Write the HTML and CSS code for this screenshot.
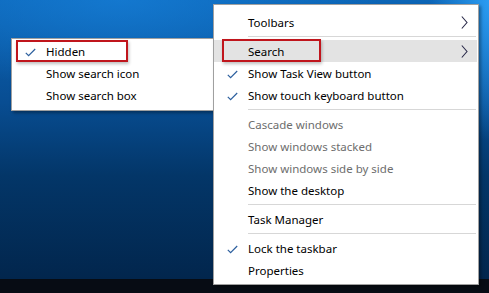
FILE: index.html
```html
<!DOCTYPE html>
<html>
  <head>
    <meta charset="utf-8">
    <title>Taskbar menu</title>
    <link rel="stylesheet" href="styles.css">
  </head>
  <body>
    <div class="desktop">

      <!-- search submenu -->
      <div class="menu submenu">
        <div class="item checked">
          <svg class="check" width="11" height="9" viewBox="0 0 11 9"><polyline points="0.8,4.8 3.6,7.6 10.2,1" /></svg>
          Hidden
        </div>
        <div class="item">Show search icon</div>
        <div class="item">Show search box</div>
      </div>

      <!-- taskbar context menu -->
      <div class="menu mainmenu">
        <div class="item">
          Toolbars
          <svg class="arrow" width="7" height="13" viewBox="0 0 7 13"><polyline points="0.8,0.5 6,6.5 0.8,12.5" /></svg>
        </div>
        <div class="sep"></div>
        <div class="item active">
          Search
          <svg class="arrow" width="7" height="13" viewBox="0 0 7 13"><polyline points="0.8,0.5 6,6.5 0.8,12.5" /></svg>
        </div>
        <div class="item checked">
          <svg class="check" width="11" height="9" viewBox="0 0 11 9"><polyline points="0.8,4.8 3.6,7.6 10.2,1" /></svg>
          Show Task View button
        </div>
        <div class="item checked">
          <svg class="check" width="11" height="9" viewBox="0 0 11 9"><polyline points="0.8,4.8 3.6,7.6 10.2,1" /></svg>
          Show touch keyboard button
        </div>
        <div class="sep"></div>
        <div class="item disabled">Cascade windows</div>
        <div class="item disabled">Show windows stacked</div>
        <div class="item disabled">Show windows side by side</div>
        <div class="item">Show the desktop</div>
        <div class="sep"></div>
        <div class="item">Task Manager</div>
        <div class="sep"></div>
        <div class="item checked">
          <svg class="check" width="11" height="9" viewBox="0 0 11 9"><polyline points="0.8,4.8 3.6,7.6 10.2,1" /></svg>
          Lock the taskbar
        </div>
        <div class="item">Properties</div>
      </div>

      <!-- annotation boxes -->
      <div class="mark mark-hidden"></div>
      <div class="mark mark-search"></div>

      <div class="taskbar"></div>
    </div>
  </body>
</html>
```

FILE: styles.css
```css
html, body {
  margin: 0;
  padding: 0;
}

.desktop {
  position: relative;
  width: 489px;
  height: 293px;
  overflow: hidden;
  font-family: "Noto Sans", sans-serif;
  font-size: 11.5px;
  background:
    radial-gradient(ellipse 60px 140px at 489px 0px, #2b9cf2 0%, rgba(43, 156, 242, 0) 100%),
    radial-gradient(ellipse 260px 90px at 120px 0px, rgba(22, 126, 215, 0.75) 0%, rgba(22, 126, 215, 0) 100%),
    linear-gradient(to bottom, #0c65b6 0%, #084d92 35%, #033668 60%, #02264d 95%);
}

.taskbar {
  position: absolute;
  left: 0;
  right: 0;
  bottom: 0;
  height: 14px;
  background-color: #070c14;
}

.menu {
  position: absolute;
  box-sizing: border-box;
  background-color: #fff;
  border: 1px solid #a0a0a0;
  box-shadow: 2px 2px 3px rgba(0, 0, 0, 0.35);
  z-index: 2;
}

.mainmenu {
  left: 213px;
  top: 4px;
  width: 266px;
  height: 281px;
  padding: 6px 1px 3px 0;
}

.submenu {
  left: 11px;
  top: 38px;
  width: 204px;
  height: 73px;
  padding: 1px 1px 4px 0;
}

.item {
  position: relative;
  height: 21px;
  padding-top: 1px;
  line-height: 22px;
  padding-left: 34px;
  color: #000;
  white-space: nowrap;
}

.item.active {
  background-color: #e3e3e3;
}

.item.disabled {
  color: #6d6d6d;
}

.check {
  position: absolute;
  left: 13px;
  top: 8px;
  fill: none;
  stroke: #2c5f9e;
  stroke-width: 1.2;
}

.arrow {
  position: absolute;
  right: 9px;
  top: 5px;
  fill: none;
  stroke: #2a2a4a;
  stroke-width: 1.1;
}

.sep {
  height: 1px;
  margin: 3px 1px 3px 34px;
  background-color: #d7d7d7;
}

.mark {
  position: absolute;
  box-sizing: border-box;
  border: 2px solid #c0151c;
  box-shadow: 1px 2px 3px rgba(0, 0, 0, 0.25);
  z-index: 3;
}

.mark-hidden {
  left: 16px;
  top: 40px;
  width: 112px;
  height: 22px;
}

.mark-search {
  left: 222px;
  top: 39px;
  width: 99px;
  height: 23px;
}
```
